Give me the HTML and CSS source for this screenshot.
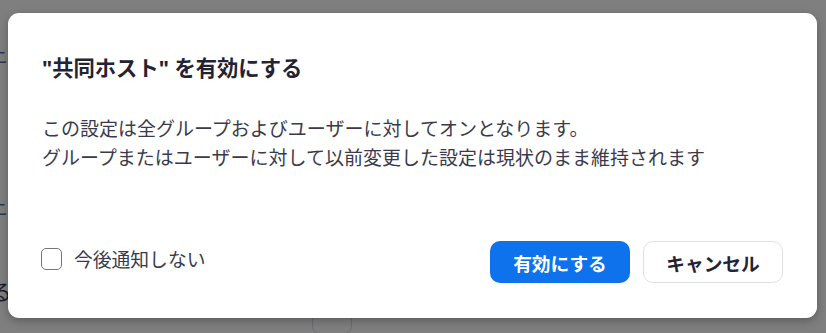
FILE: index.html
```html
<!DOCTYPE html>
<html lang="ja">
<head>
<meta charset="utf-8">
<title>共同ホスト</title>
<link rel="stylesheet" href="styles.css">
</head>
<body>
<div class="page">
  <div class="page-row row-a">ニ</div>
  <div class="page-row row-b">ニ</div>
  <div class="page-row row-c">る</div>
  <div class="page-bottom">
    <span class="bottom-mark">↑</span>
    <span class="bottom-btn"></span>
  </div>
</div>
<div class="overlay">
  <div class="dialog" role="dialog">
    <h1 class="dialog-title">"共同ホスト" を有効にする</h1>
    <div class="dialog-body">
      <p class="line">この設定は全グループおよびユーザーに対してオンとなります。</p>
      <p class="line">グループまたはユーザーに対して以前変更した設定は現状のまま維持されます</p>
    </div>
    <div class="dialog-footer">
      <label class="check">
        <span class="check-box"></span>
        <span class="check-label">今後通知しない</span>
      </label>
      <div class="actions">
        <button class="btn btn-primary">有効にする</button>
        <button class="btn btn-secondary">キャンセル</button>
      </div>
    </div>
  </div>
</div>
</body>
</html>
```
FILE: styles.css
```css
html, body {
  margin: 0;
  padding: 0;
  width: 826px;
  height: 333px;
  overflow: hidden;
}
body {
  background: #7f7f7f;
  font-family: "Noto Sans", "Noto Sans CJK JP", sans-serif;
  position: relative;
}
.page {
  height: 333px;
  color: #2a2a44;
  font-family: "Noto Sans CJK JP", sans-serif;
}
.page-row {
  font-size: 18px;
  line-height: 20px;
  margin-left: -10px;
  color: #2e3550;
}
.row-a { padding-top: 46px; }
.row-b { margin-top: 132px; }
.row-c { margin-top: 62px; font-size: 22px; color: #1d1d2a; }
.page-bottom {
  display: flex;
  align-items: flex-start;
  margin-top: 4px;
  padding-left: 228px;
}
.bottom-mark {
  font-size: 14px;
  line-height: 14px;
  color: #2a2a44;
}
.bottom-btn {
  width: 38px;
  height: 20px;
  margin-left: 70px;
  margin-top: 8px;
  border: 1px solid #6c6c74;
  border-radius: 8px;
}
.overlay {
  position: absolute;
  left: 8px;
  top: 13px;
}
.dialog {
  width: 809px;
  height: 305px;
  box-sizing: border-box;
  background: #ffffff;
  border-radius: 11px;
  box-shadow: 0 3px 10px rgba(0, 0, 0, 0.28);
  padding: 40px 34px 35px 34px;
  display: flex;
  flex-direction: column;
}
.dialog-title {
  margin: 0;
  font-size: 21.3px;
  line-height: 30px;
  font-weight: 700;
  color: #232333;
}
.dialog-body {
  margin-top: 30px;
}
.line {
  margin: 0;
  font-family: "Noto Sans CJK JP", sans-serif;
  font-size: 19px;
  line-height: 29px;
  color: #3a3a4c;
  white-space: nowrap;
}
.dialog-footer {
  margin-top: auto;
  display: flex;
  align-items: center;
  justify-content: space-between;
}
.check {
  display: flex;
  align-items: center;
  gap: 12px;
  margin-top: -6px;
  margin-left: -1px;
}
.check-box {
  width: 19px;
  height: 20px;
  border: 1.5px solid #747487;
  border-radius: 5px;
}
.check-label {
  font-family: "Noto Sans CJK JP", sans-serif;
  font-size: 18.8px;
  line-height: 26px;
  color: #3a3a4c;
}
.actions {
  display: flex;
  gap: 13px;
}
.btn {
  width: 140px;
  height: 42px;
  border-radius: 10px;
  font-family: "Noto Sans CJK JP", sans-serif;
  font-size: 18.7px;
  font-weight: 700;
  padding: 0;
  display: flex;
  align-items: center;
  justify-content: center;
}
.btn-primary {
  background: #0e72ed;
  color: #ffffff;
  border: none;
}
.btn-secondary {
  background: #ffffff;
  color: #232333;
  border: 1px solid #dfe0e6;
}
```
